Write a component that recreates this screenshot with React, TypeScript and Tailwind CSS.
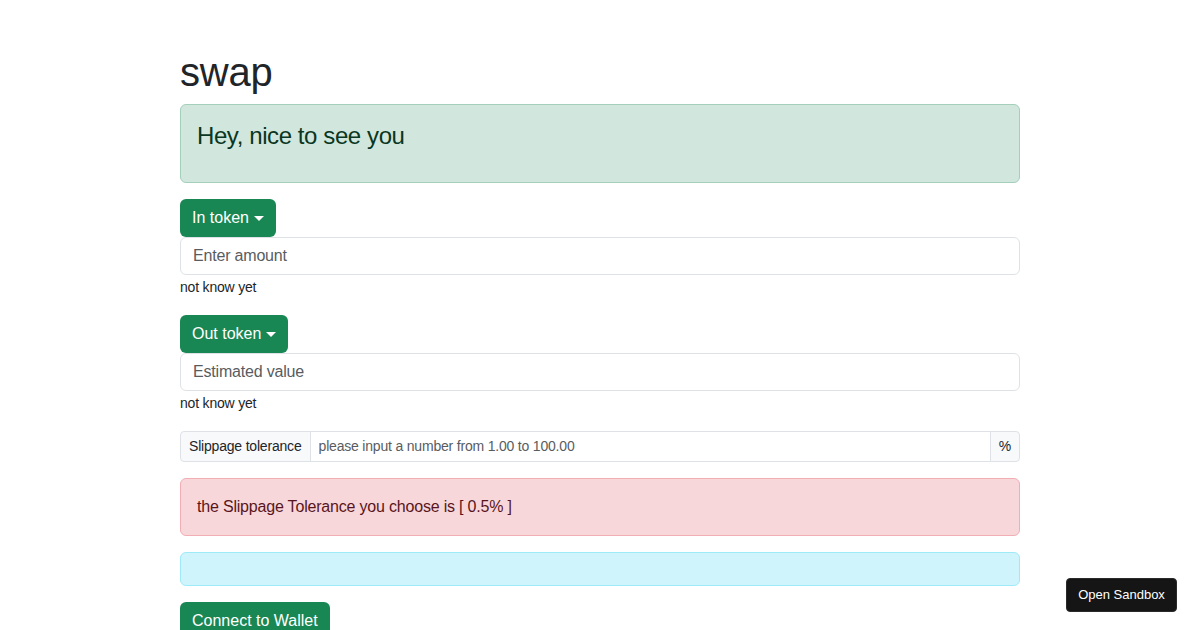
import { useState } from 'react';

function Caret() {
  return (
    <span className="ml-[5px] inline-block h-0 w-0 border-x-[5px] border-t-[5px] border-x-transparent border-t-white align-[3px]" />
  );
}

function TokenButton({ label }: { label: string }) {
  return (
    <button className="flex h-[38px] items-center rounded-[6px] bg-[#198754] px-[12px] text-[16px] tracking-normal text-white hover:bg-[#157347]">
      {label}
      <Caret />
    </button>
  );
}

export default function App() {
  const [amount, setAmount] = useState('');
  const [estimate, setEstimate] = useState('');
  const [slippage, setSlippage] = useState('');

  return (
    <div className="relative min-h-[630px] bg-white font-['Liberation_Sans',Arial,sans-serif] tracking-[-0.012em] text-[#212529]">
      <div className="mx-auto w-[840px] pt-[48px]">
        <h1 className="h-[48px] text-[40px] leading-[48px]">swap</h1>

        <div className="mt-[8px] rounded-[6px] border border-[#a3cfbb] bg-[#d1e7dd] p-[16px] text-[#0a3622]">
          <h3 className="mb-[16px] text-[24px] leading-[29px] tracking-[-0.017em]">Hey, nice to see you</h3>
        </div>

        <div className="mt-[16px]">
          <TokenButton label="In token" />
          <input
            value={amount}
            onChange={e => setAmount(e.target.value)}
            placeholder="Enter amount"
            className="block h-[38px] w-full rounded-[6px] border border-[#dee2e6] px-[12px] text-[16px] outline-none placeholder:text-[#595c5f]"
          />
          <p className="mb-[16px] text-[14px] leading-[24px]">not know yet</p>
        </div>

        <div>
          <TokenButton label="Out token" />
          <input
            value={estimate}
            onChange={e => setEstimate(e.target.value)}
            placeholder="Estimated value"
            className="block h-[38px] w-full rounded-[6px] border border-[#dee2e6] px-[12px] text-[16px] outline-none placeholder:text-[#595c5f]"
          />
          <p className="mb-[16px] text-[14px] leading-[24px]">not know yet</p>
        </div>

        <div className="flex h-[31px] text-[14px]">
          <span className="flex items-center rounded-l-[4px] border border-[#dee2e6] bg-[#f8f9fa] px-[8px]">
            Slippage tolerance
          </span>
          <input
            value={slippage}
            onChange={e => setSlippage(e.target.value)}
            placeholder="please input a number from 1.00 to 100.00"
            className="-ml-px min-w-0 flex-1 border border-[#dee2e6] px-[8px] text-[14px] outline-none placeholder:text-[#595c5f]"
          />
          <span className="-ml-px flex items-center rounded-r-[4px] border border-[#dee2e6] bg-[#f8f9fa] px-[8px]">
            %
          </span>
        </div>

        <div className="mt-[16px] rounded-[6px] border border-[#f1aeb5] bg-[#f8d7da] p-[16px] text-[16px] leading-[24px] text-[#58151c]">
          the Slippage Tolerance you choose is [ 0.5% ]
        </div>

        <div className="mt-[16px] h-[34px] rounded-[6px] border border-[#9eeaf9] bg-[#cff4fc]" />

        <button className="mt-[16px] h-[38px] rounded-[6px] bg-[#198754] px-[12px] text-[16px] tracking-normal text-white">
          Connect to Wallet
        </button>
      </div>

      <button className="fixed bottom-[18px] right-[23px] h-[34px] w-[111px] rounded-[4px] border border-[#2a2a2a] bg-[#151515] text-[13px] tracking-normal text-white">
        Open Sandbox
      </button>
    </div>
  );
}
